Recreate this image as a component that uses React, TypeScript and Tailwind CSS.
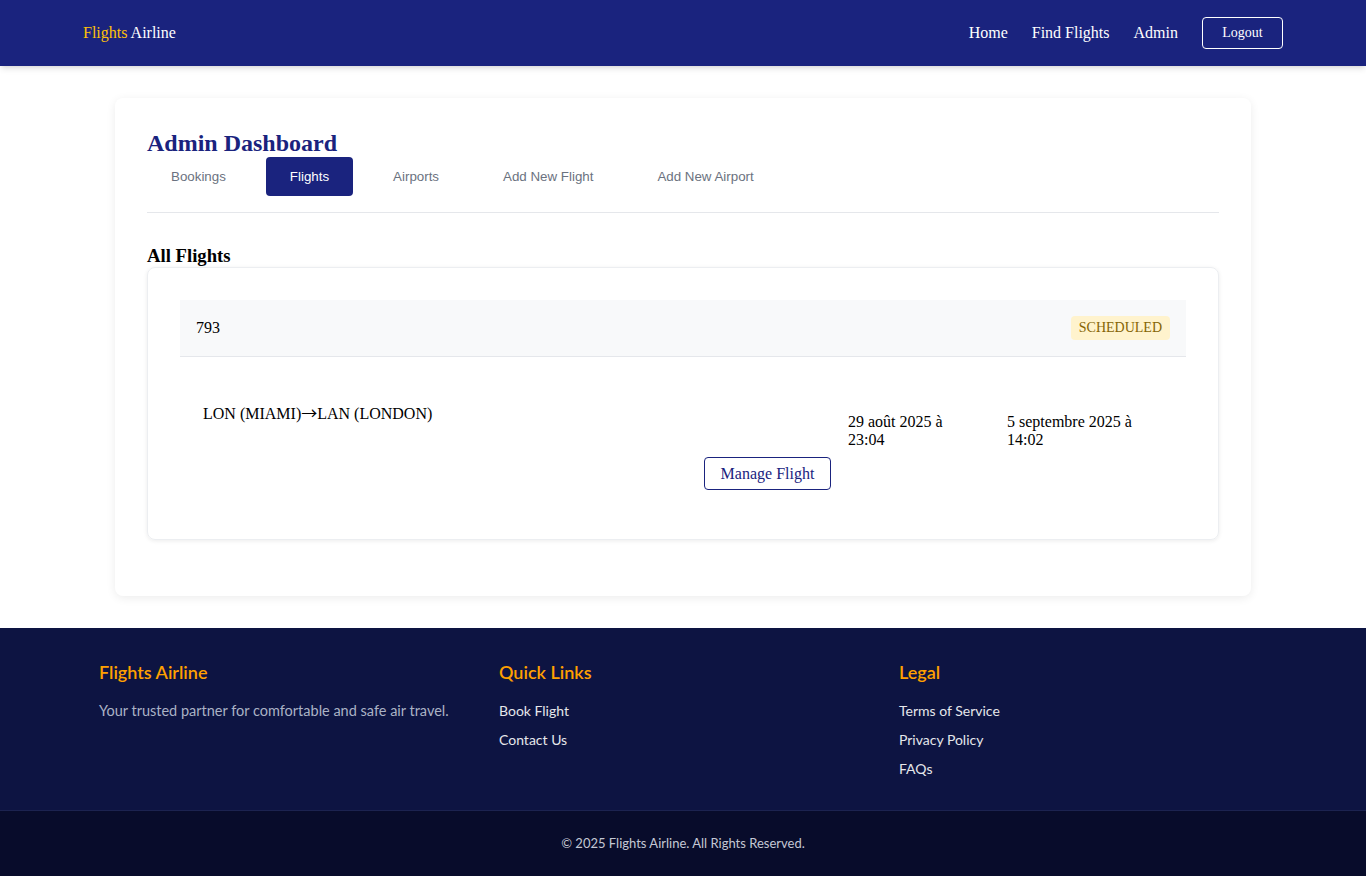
export default function App() {
  const serif = { fontFamily: '"Liberation Serif", "Times New Roman", serif' };
  const tabs = ["Bookings", "Flights", "Airports", "Add New Flight", "Add New Airport"];

  return (
    <div className="min-h-screen bg-white" style={serif}>
      <header className="bg-[#1a237e] h-[66px] shadow-md">
        <div className="max-w-[1200px] mx-auto h-full flex items-center justify-between">
          <a className="text-base text-white">
            <span className="text-[#ffc107]">Flights</span> Airline
          </a>
          <nav className="flex items-center gap-6 text-base text-white">
            <a>Home</a>
            <a>Find Flights</a>
            <a>Admin</a>
            <button className="border border-white rounded-[4px] w-[81px] h-[32px] text-sm text-white">Logout</button>
          </nav>
        </div>
      </header>

      <main className="max-w-[1200px] mx-auto px-8 py-8">
        <div className="bg-white rounded-lg shadow-[0_2px_10px_rgba(0,0,0,0.08)] p-8 pb-[56px]">
          <h2 className="text-2xl font-bold text-[#1a237e] leading-[27px]">Admin Dashboard</h2>
          <div className="flex gap-4 pb-4 border-b border-[#e5e7eb]" style={{ fontFamily: '"Liberation Sans", Arial, sans-serif' }}>
            {tabs.map((t) =>
              t === "Flights" ? (
                <button key={t} className="h-[39px] px-6 rounded-[4px] bg-[#1a237e] text-white text-[13.33px]">{t}</button>
              ) : (
                <button key={t} className="h-[39px] px-6 rounded-[4px] text-[#6b7280] text-[13.33px]">{t}</button>
              )
            )}
          </div>

          <h3 className="mt-8 mb-[1px] text-[18.7px] font-bold text-black leading-[21px]">All Flights</h3>
          <div className="border border-[#eceef1] rounded-lg shadow-[0_1px_4px_rgba(0,0,0,0.08)] p-8">
            <div className="flex items-center justify-between bg-[#f8f9fa] border-b border-[#e5e7eb] px-4 py-4">
              <span className="text-base text-black leading-6">793</span>
              <span className="bg-[#fff3cd] text-[#856404] text-sm leading-4 px-2 py-1 rounded-[4px]">SCHEDULED</span>
            </div>
            <div className="flex pt-4 pb-4 pl-[23px] pr-6 min-h-[150px]">
              <div className="flex-1 pt-[30px] text-base text-black leading-[18px]">
                LON (MIAMI)<span style={{ fontFamily: '"Noto Sans CJK SC", sans-serif' }}>→</span>LAN (LONDON)
              </div>
              <button className="self-end border border-[#1a237e] rounded-[4px] text-[#1a237e] text-base w-[127px] h-[33px] mb-[1px]">Manage Flight</button>
              <div className="ml-[17px] mr-[32px] w-[127px] pt-[40px] text-base text-black leading-[18px]">29 août 2025 à 23:04</div>
              <div className="w-[155px] pt-[40px] text-base text-black leading-[18px]">5 septembre 2025 à 14:02</div>
            </div>
          </div>
        </div>
      </main>

      <footer className="bg-[#0d1442]" style={{ fontFamily: 'Lato, "Open Sans", sans-serif' }}>
        <div className="max-w-[1200px] mx-auto px-4 pt-[32px] pb-[31px] grid grid-cols-3 gap-8">
          <div>
            <h4 className="text-[18px] font-semibold text-[#ffa000] leading-[24px]">Flights Airline</h4>
            <p className="mt-[17px] text-[14.5px] text-[#aab2c5] leading-[20px]">Your trusted partner for comfortable and safe air travel.</p>
          </div>
          <div>
            <h4 className="text-[18px] font-semibold text-[#ffa000] leading-[24px]">Quick Links</h4>
            <ul className="mt-[17px] flex flex-col gap-[9px] text-sm text-[#e5e7eb] leading-[20px]">
              <li>Book Flight</li>
              <li>Contact Us</li>
            </ul>
          </div>
          <div>
            <h4 className="text-[18px] font-semibold text-[#ffa000] leading-[24px]">Legal</h4>
            <ul className="mt-[17px] flex flex-col gap-[9px] text-sm text-[#e5e7eb] leading-[20px]">
              <li>Terms of Service</li>
              <li>Privacy Policy</li>
              <li>FAQs</li>
            </ul>
          </div>
        </div>
        <div className="bg-[#080c2b] border-t border-[#1c2350] h-[66px] flex items-center justify-center text-[13px] text-[#c4c8d4]">
          © 2025 Flights Airline. All Rights Reserved.
        </div>
      </footer>
    </div>
  );
}
